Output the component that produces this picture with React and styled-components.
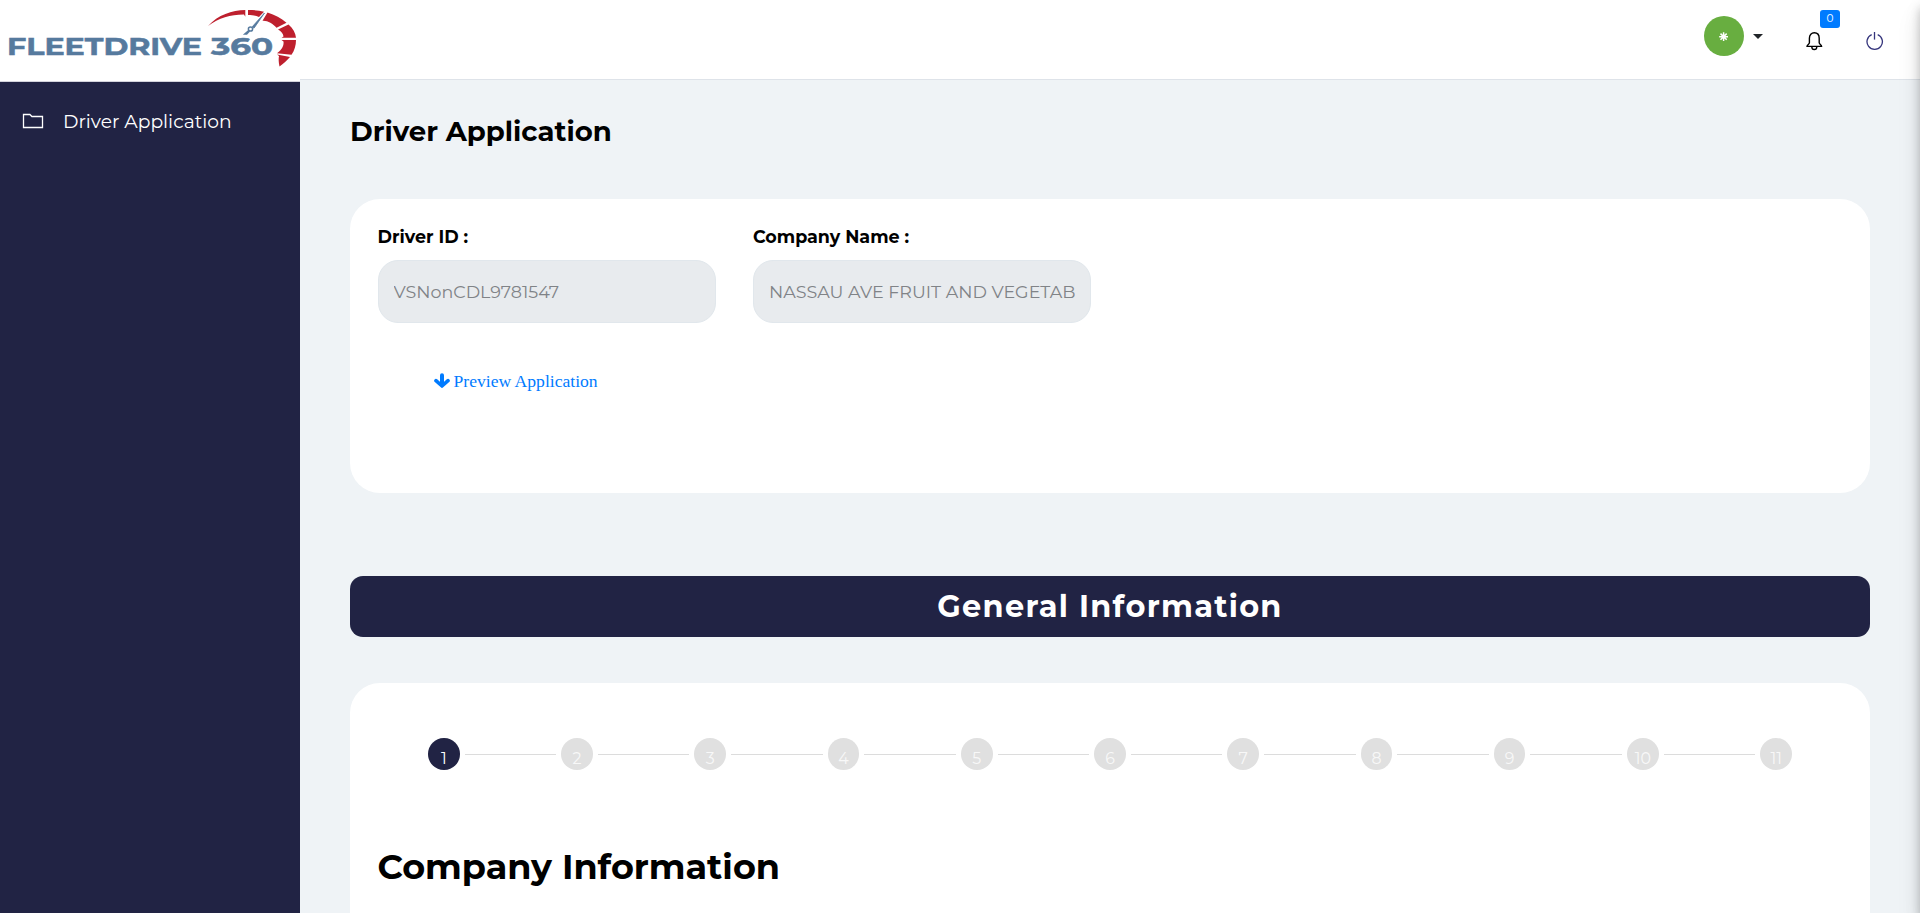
import React from 'react';
import styled, { createGlobalStyle } from 'styled-components';

const GlobalStyle = createGlobalStyle`
  *, *::before, *::after { box-sizing: border-box; }
  html, body { margin: 0; height: 100%; overflow: hidden; }
  body {
    background: #eff3f6;
    color: #000;
    font-family: Montserrat, Inter, "Open Sans", sans-serif;
  }
  h1, h2, h3 { margin: 0; }
`;

const Shell = styled.div`
  display: grid;
  grid-template-columns: 300px 1fr;
  height: 100vh;
  overflow: hidden;
  position: relative;
`;

const EdgeShadow = styled.div`
  position: absolute;
  top: 0;
  bottom: 0;
  left: 100%;
  width: 20px;
  box-shadow: 0 8px 10px rgba(0, 0, 0, 0.2), 0 16px 24px rgba(0, 0, 0, 0.1), 0 6px 20px rgba(0, 0, 0, 0.06);
`;

const Side = styled.aside`
  display: flex;
  flex-direction: column;
  background: #212344;
`;

const Brand = styled.div`
  height: 82px;
  flex: none;
  background: #fff;
  border-bottom: 1px solid #d3d3dc;
`;

const BrandArt = styled.svg`
  display: block;
`;

const NavItem = styled.a`
  display: flex;
  align-items: center;
  gap: 19px;
  height: 50px;
  margin-top: 14px;
  padding-left: 22px;
  color: #fff;
  font-size: 18.7px;
  line-height: 1;

  svg { display: block; flex: none; }
`;

const NavLabel = styled.span`
  padding-top: 2px;
`;

const Main = styled.main`
  display: flex;
  flex-direction: column;
  min-width: 0;
`;

const TopBar = styled.header`
  display: flex;
  justify-content: flex-end;
  align-items: flex-start;
  height: 80px;
  flex: none;
  padding-right: 36px;
  background: #fff;
  border-bottom: 1px solid #dee3e9;
`;

const Avatar = styled.div`
  display: grid;
  place-items: center;
  width: 40px;
  height: 40px;
  margin-top: 16px;
  border-radius: 50%;
  background: #68ae40;
`;

const Caret = styled.span`
  margin: 34px 43px 0 9px;
  border: 5px solid transparent;
  border-top-color: #212529;
  border-bottom: 0;
`;

const BellButton = styled.div`
  position: relative;
  width: 17px;
  margin: 32px 43px 0 0;

  svg { display: block; }
`;

const Badge = styled.span`
  position: absolute;
  left: 14px;
  top: -22px;
  width: 20px;
  height: 18px;
  border-radius: 3px;
  background: #007bff;
  color: #fff;
  font-size: 10.5px;
  line-height: 17px;
  text-align: center;
`;

const PowerButton = styled.div`
  width: 18px;
  margin-top: 31px;

  svg { display: block; }
`;

const Content = styled.div`
  display: flex;
  flex-direction: column;
  padding: 34px 50px 0;
`;

const PageTitle = styled.h1`
  height: 85px;
  font-size: 27.5px;
  line-height: 35px;
  font-weight: 700;
`;

const Card = styled.section`
  flex: none;
  height: ${(p) => p.$height}px;
  padding: ${(p) => p.$top}px 27.5px 0;
  border-radius: 30px;
  background: #fff;
`;

const FieldRow = styled.div`
  display: flex;
  gap: 37.2px;
`;

const Field = styled.label`
  width: 338.3px;
  font-size: 17.5px;
  font-weight: 700;
  line-height: 24px;
`;

const ReadOnlyInput = styled.input`
  display: block;
  width: 100%;
  height: 63px;
  margin-top: 11px;
  padding: 0 15px;
  border: 1px solid #e1e7ec;
  border-radius: 20px;
  background: #e8ebee;
  color: #808387;
  font: 400 17.5px Montserrat, Inter, sans-serif;
`;

const PreviewLink = styled.a`
  display: flex;
  align-items: center;
  gap: 4px;
  margin: 47px 0 0 56px;
  color: #007bff;
  font: 17.6px/22px "Liberation Serif", serif;

  svg { display: block; }
`;

const Banner = styled.h2`
  flex: none;
  height: 61px;
  margin: 83px 0 46px;
  border-radius: 13px;
  background: #212344;
  color: #fff;
  font-size: 30.4px;
  font-weight: 700;
  line-height: 61px;
  letter-spacing: 1.3px;
  text-align: center;
`;

const Stepper = styled.ol`
  display: flex;
  align-items: center;
  margin: 0;
  padding: 0 50.5px;
  list-style: none;
`;

const Step = styled.li`
  flex: none;
  width: 31.6px;
  height: 32px;
  padding-top: 5px;
  border-radius: 50%;
  background: ${(p) => (p.$active ? '#212344' : '#e0e0e0')};
  color: ${(p) => (p.$active ? '#fff' : '#f8f8f8')};
  font-size: 15.8px;
  line-height: 31px;
  text-align: center;
`;

const StepLine = styled.li`
  flex: 1;
  height: 1px;
  margin: 1px 5px 0;
  background: #dcdcdc;
`;

const SectionTitle = styled.h3`
  margin-top: 75px;
  font-size: 35px;
  font-weight: 700;
  line-height: 44px;
`;

const STEPS = Array.from({ length: 11 }, (_, i) => i + 1);

function Logo() {
  return (
    <BrandArt width="300" height="81" viewBox="0 0 300 81">
      <g fill="#567a9e" stroke="#567a9e" strokeWidth="0.5" fontFamily="Montserrat, Inter, sans-serif" fontWeight="700" fontSize="23">
        <text x="7" y="54.7" textLength="195" lengthAdjust="spacingAndGlyphs">FLEETDRIVE</text>
        <text x="211" y="54.7" textLength="62" lengthAdjust="spacingAndGlyphs">360</text>
      </g>
      <g fill="#be202e">
        <path d="M208 26 C218 15 232 10 245.3 10 V16.800 L244 14.600 C231 14.5 219 18 208 26Z" />
        <path d="M248 10 C254 10 259 10.5 264 11.7 L259 17 C255 15.5 252 15 248 15Z" />
        <path d="M267.5 12.5 C275 14.8 281 18 286.5 22.7 L276.500 27.800 C272.500 23.500 268 20.500 262.500 20.800Z" />
        <path d="M288.500 24.500 C293 28.500 295.500 33 296 37.800 H281.500 L283.500 36.500 C283.200 33.500 281.500 31.500 278 29.500Z" />
        <path d="M296 40 C296 45.500 294.500 50.500 291.500 54.700 L277 53.200 C282.500 49.500 284 45 283.500 41.500 L281.500 40Z" />
        <path d="M290 57 C287 60.500 283.500 63.500 279.500 66.500 C278.500 62 278.500 58.500 279 56 L277 54.500Z" />
      </g>
      <path d="M264.500 13 L252.300 26.700 L254 28.200Z" fill="#567a9e" stroke="#567a9e" strokeWidth="0.8" />
      <circle cx="250.500" cy="29" r="2.100" fill="#fff" stroke="#567a9e" strokeWidth="1.500" />
      <path d="M248.300 30 L242.800 34.800 H247 L250 31.500Z" fill="#567a9e" />
    </BrandArt>
  );
}

function App() {
  return (
    <>
      <GlobalStyle />
      <Shell>
        <Side>
          <Brand>
            <Logo />
          </Brand>
          <NavItem>
            <svg width="22" height="18" viewBox="0 0 22 18" fill="none" stroke="#fff" strokeWidth="1.300">
              <path d="M1.500 15.500 V2.500 H7.900 L9.900 4.500 H20.500 V15.500Z" />
            </svg>
            <NavLabel>Driver Application</NavLabel>
          </NavItem>
        </Side>
        <Main>
          <TopBar>
            <Avatar>
              <svg width="12" height="12" viewBox="0 0 12 12" stroke="#fff" strokeWidth="1.500">
                <path d="M5.600 2.300v8.800M1.200 6.700h8.800M2.500 3.600l6.200 6.200M8.700 3.600l-6.200 6.200" />
              </svg>
            </Avatar>
            <Caret />
            <BellButton>
              <svg width="17" height="19" viewBox="0 0 17 19" fill="none" stroke="#000" strokeWidth="1.400">
                <path d="M3.400 10.800 V6.200 C3.400 2.600 5.500 .8 8.300 .8 S13.200 2.600 13.200 6.200 V10.800 C13.200 12.300 15.600 12.700 15.600 14.400 H1 C1 12.700 3.400 12.300 3.400 10.800Z" />
                <path d="M5.800 14.700 C5.900 18.500 10.700 18.500 10.800 14.700" />
              </svg>
              <Badge>0</Badge>
            </BellButton>
            <PowerButton>
              <svg width="18" height="20" viewBox="0 0 18 20" fill="none" stroke="#35357c" strokeWidth="1.300">
                <path d="M5.700 3.600 A7.700 7.700 0 1 0 11.700 3.600" />
                <path d="M8.500 1 V8.600" />
              </svg>
            </PowerButton>
          </TopBar>
          <Content>
            <PageTitle>Driver Application</PageTitle>
            <Card $height={294} $top={26}>
              <FieldRow>
                <Field>
                  Driver ID :
                  <ReadOnlyInput readOnly value="VSNonCDL9781547" />
                </Field>
                <Field>
                  Company Name :
                  <ReadOnlyInput readOnly value="NASSAU AVE FRUIT AND VEGETAB" />
                </Field>
              </FieldRow>
              <PreviewLink>
                <svg width="16" height="16" viewBox="0 0 16 16" fill="none" stroke="#007bff" strokeWidth="4" strokeLinecap="round">
                  <path d="M8 2.200 V11" />
                  <path d="M2 7.700 L8 13 L14 7.700" strokeWidth="3.600" strokeLinejoin="round" />
                </svg>
                Preview Application
              </PreviewLink>
            </Card>
            <Banner>General Information</Banner>
            <Card $height={400} $top={55}>
              <Stepper>
                {STEPS.map((n) => (
                  <React.Fragment key={n}>
                    {n > 1 && <StepLine />}
                    <Step $active={n === 1}>{n}</Step>
                  </React.Fragment>
                ))}
              </Stepper>
              <SectionTitle>Company Information</SectionTitle>
            </Card>
          </Content>
        </Main>
        <EdgeShadow />
      </Shell>
    </>
  );
}

export default App;
